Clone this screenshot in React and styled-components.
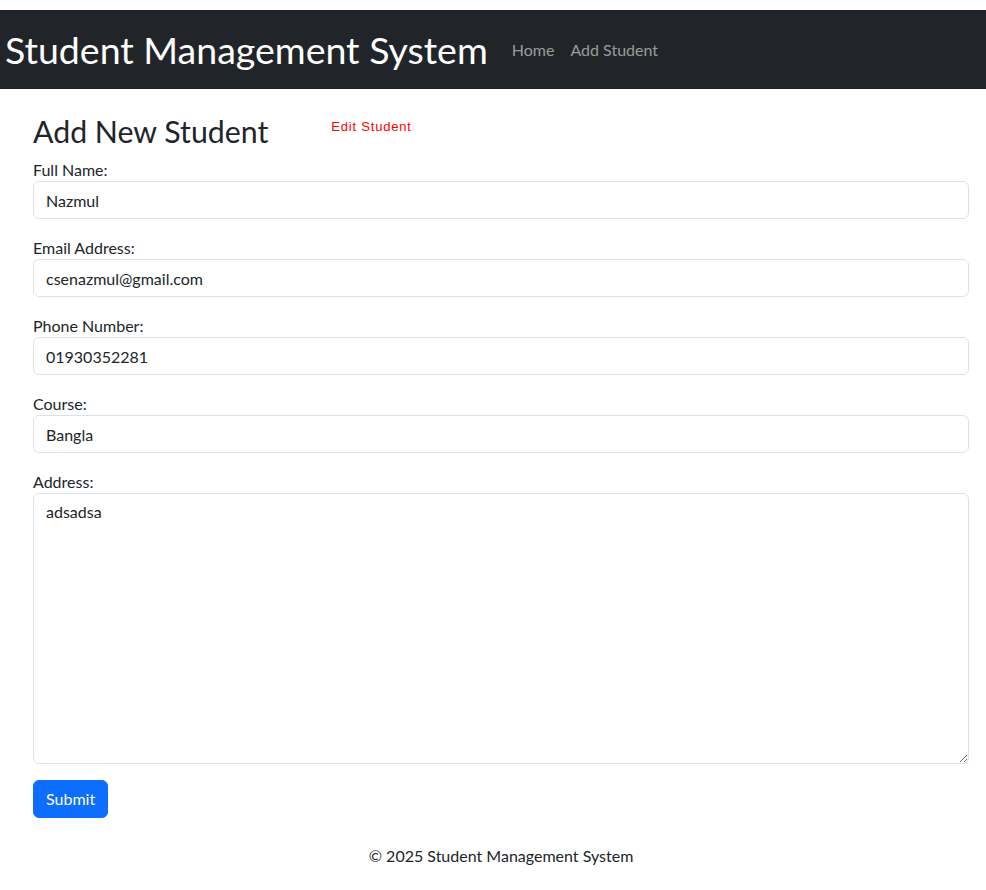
import React from 'react';
import styled, { createGlobalStyle } from 'styled-components';

const GlobalStyle = createGlobalStyle`
  * {
    box-sizing: border-box;
  }
  body {
    margin: 0;
    background: #fff;
    color: #212529;
    font-family: Lato, "Noto Sans", sans-serif;
    font-size: 16px;
    line-height: 1.5;
  }
`;

const Page = styled.div`
  padding-top: 10px;
`;

const Navbar = styled.nav`
  height: 79px;
  background: #212529;
  display: flex;
  align-items: center;
  padding: 0 5px;
`;

const Brand = styled.h1`
  margin: 0 16px 0 0;
  font-size: 37.5px;
  font-weight: 400;
  line-height: 1.2;
  color: #fff;
`;

const NavLinks = styled.ul`
  display: flex;
  margin: 0;
  padding: 0;
  list-style: none;
`;

const NavLink = styled.a`
  display: block;
  padding: 8px;
  color: rgba(255, 255, 255, 0.55);
  text-decoration: none;
`;

const Container = styled.main`
  padding: 24px 17px 0 33px;
`;

const HeaderRow = styled.div`
  display: flex;
  align-items: flex-start;
  gap: 63px;
  margin-bottom: 8px;
`;

const Title = styled.h2`
  margin: 0;
  font-size: 30.3px;
  font-weight: 400;
  line-height: 1.2;
`;

const EditLink = styled.span`
  padding-top: 4px;
  font-family: "Liberation Sans", Arial, sans-serif;
  font-size: 13px;
  letter-spacing: 0.8px;
  color: #ff0000;
`;

const Field = styled.div`
  margin-bottom: 16px;
`;

const Label = styled.label`
  display: block;
  padding-top: 1px;
  margin-bottom: -1px;
`;

const Input = styled.input`
  display: block;
  width: 100%;
  height: 38px;
  padding: 6px 12px;
  font: inherit;
  color: #212529;
  background: #fff;
  border: 1px solid #dee2e6;
  border-radius: 6px;
  outline: none;
`;

const TextArea = styled.textarea`
  display: block;
  width: 100%;
  height: 271px;
  padding: 6px 12px;
  font: inherit;
  color: #212529;
  background: #fff;
  border: 1px solid #dee2e6;
  border-radius: 6px;
  outline: none;
  resize: vertical;
`;

const SubmitButton = styled.button`
  display: block;
  height: 38px;
  padding: 6px 12px;
  font: inherit;
  color: #fff;
  background: #0d6efd;
  border: 1px solid #0d6efd;
  border-radius: 6px;
`;

const Footer = styled.footer`
  padding: 26px 0 20px;
  text-align: center;
`;

const fields = [
  { label: 'Full Name:', value: 'Nazmul' },
  { label: 'Email Address:', value: 'csenazmul@gmail.com' },
  { label: 'Phone Number:', value: '01930352281' },
  { label: 'Course:', value: 'Bangla' },
];

export default function App() {
  return (
    <Page>
      <GlobalStyle />
      <Navbar>
        <Brand>Student Management System</Brand>
        <NavLinks>
          <li>
            <NavLink href="#">Home</NavLink>
          </li>
          <li>
            <NavLink href="#">Add Student</NavLink>
          </li>
        </NavLinks>
      </Navbar>
      <Container>
        <HeaderRow>
          <Title>Add New Student</Title>
          <EditLink>Edit Student</EditLink>
        </HeaderRow>
        <form onSubmit={(e) => e.preventDefault()}>
          {fields.map((f) => (
            <Field key={f.label}>
              <Label>{f.label}</Label>
              <Input type="text" defaultValue={f.value} />
            </Field>
          ))}
          <Field>
            <Label>Address:</Label>
            <TextArea defaultValue="adsadsa" />
          </Field>
          <SubmitButton type="submit">Submit</SubmitButton>
        </form>
        <Footer>© 2025 Student Management System</Footer>
      </Container>
    </Page>
  );
}
